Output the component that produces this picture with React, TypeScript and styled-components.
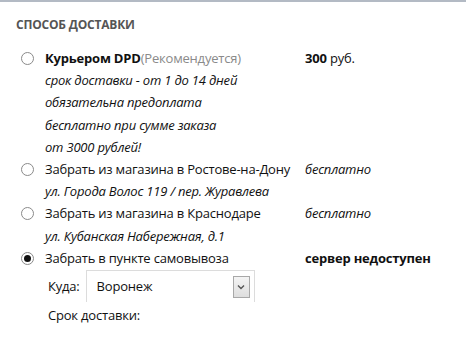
import React from 'react';
import styled, { createGlobalStyle } from 'styled-components';

const GlobalStyle = createGlobalStyle`
  html, body {
    margin: 0;
    padding: 0;
    background: #fff;
  }
  body {
    font-family: "Open Sans", "Noto Sans", sans-serif;
    font-size: 13px;
    letter-spacing: -0.2px;
    color: #111;
  }
`;

const Panel = styled.section`
  width: 466px;
  border-top: 2px solid #b3bac4;
  padding: 14px 0 0 16px;
  box-sizing: border-box;
`;

const Heading = styled.h3`
  margin: 0 0 13px;
  font-size: 12px;
  font-weight: 700;
  text-transform: uppercase;
  color: #555;
  line-height: 18px;
`;

const Options = styled.div`
  display: grid;
  grid-template-columns: 12px 248px auto;
  column-gap: 12px;
  padding-left: 5px;
  line-height: 22.2px;
`;

const Radio = styled.span<{ $checked?: boolean }>`
  width: 11px;
  height: 11px;
  margin-top: 5px;
  border: 1px solid #8a8a8a;
  border-radius: 50%;
  background: #fff;
  display: flex;
  align-items: center;
  justify-content: center;
  &::after {
    content: '';
    width: 7px;
    height: 7px;
    border-radius: 50%;
    background: ${p => (p.$checked ? '#111' : 'transparent')};
  }
`;

const Label = styled.div`
  white-space: nowrap;
`;

const Name = styled.b`
  font-weight: 700;
`;

const Hint = styled.span`
  color: #8a8a8a;
`;

const Note = styled.div`
  font-style: italic;
`;

const Price = styled.div<{ $italic?: boolean; $bold?: boolean }>`
  white-space: nowrap;
  font-style: ${p => (p.$italic ? 'italic' : 'normal')};
  font-weight: ${p => (p.$bold ? 700 : 400)};
`;

const Extra = styled.div`
  grid-column: 1 / 4;
  padding: 1px 0 0 27px;
`;

const Field = styled.div`
  display: flex;
  align-items: center;
  gap: 6px;
  height: 32px;
`;

const Select = styled.div`
  width: 169px;
  height: 32px;
  border: 1px solid #dcdcdc;
  border-bottom: none;
  display: flex;
  align-items: center;
  justify-content: space-between;
  padding: 0 4px 0 10px;
  box-sizing: border-box;
`;

const Arrow = styled.span`
  width: 17px;
  height: 22px;
  box-sizing: border-box;
  border: 1px solid #a8a8a8;
  background: linear-gradient(#f4f4f4, #dedede);
  display: flex;
  align-items: center;
  justify-content: center;
`;

const Term = styled.div`
  margin-top: 2px;
  line-height: 22px;
`;

export default function App() {
  return (
    <>
      <GlobalStyle />
      <Panel>
        <Heading>Способ доставки</Heading>
        <Options>
          <Radio />
          <Label>
            <Name>Курьером DPD</Name>
            <Hint>(Рекомендуется)</Hint>
            <Note>срок доставки - от 1 до 14 дней</Note>
            <Note>обязательна предоплата</Note>
            <Note>бесплатно при сумме заказа</Note>
            <Note>от 3000 рублей!</Note>
          </Label>
          <Price>
            <b>300</b> руб.
          </Price>

          <Radio />
          <Label>
            Забрать из магазина в Ростове-на-Дону
            <Note>ул. Города Волос 119 / пер. Журавлева</Note>
          </Label>
          <Price $italic>бесплатно</Price>

          <Radio />
          <Label>
            Забрать из магазина в Краснодаре
            <Note>ул. Кубанская Набережная, д.1</Note>
          </Label>
          <Price $italic>бесплатно</Price>

          <Radio $checked />
          <Label>Забрать в пункте самовывоза</Label>
          <Price $bold>сервер недоступен</Price>

          <Extra>
            <Field>
              Куда:
              <Select>
                Воронеж
                <Arrow>
                  <svg width="8" height="6" viewBox="0 0 8 6">
                    <path d="M1 1.5 L4 4.5 L7 1.5" fill="none" stroke="#555" strokeWidth="1.4" />
                  </svg>
                </Arrow>
              </Select>
            </Field>
            <Term>Срок доставки:</Term>
          </Extra>
        </Options>
      </Panel>
    </>
  );
}
